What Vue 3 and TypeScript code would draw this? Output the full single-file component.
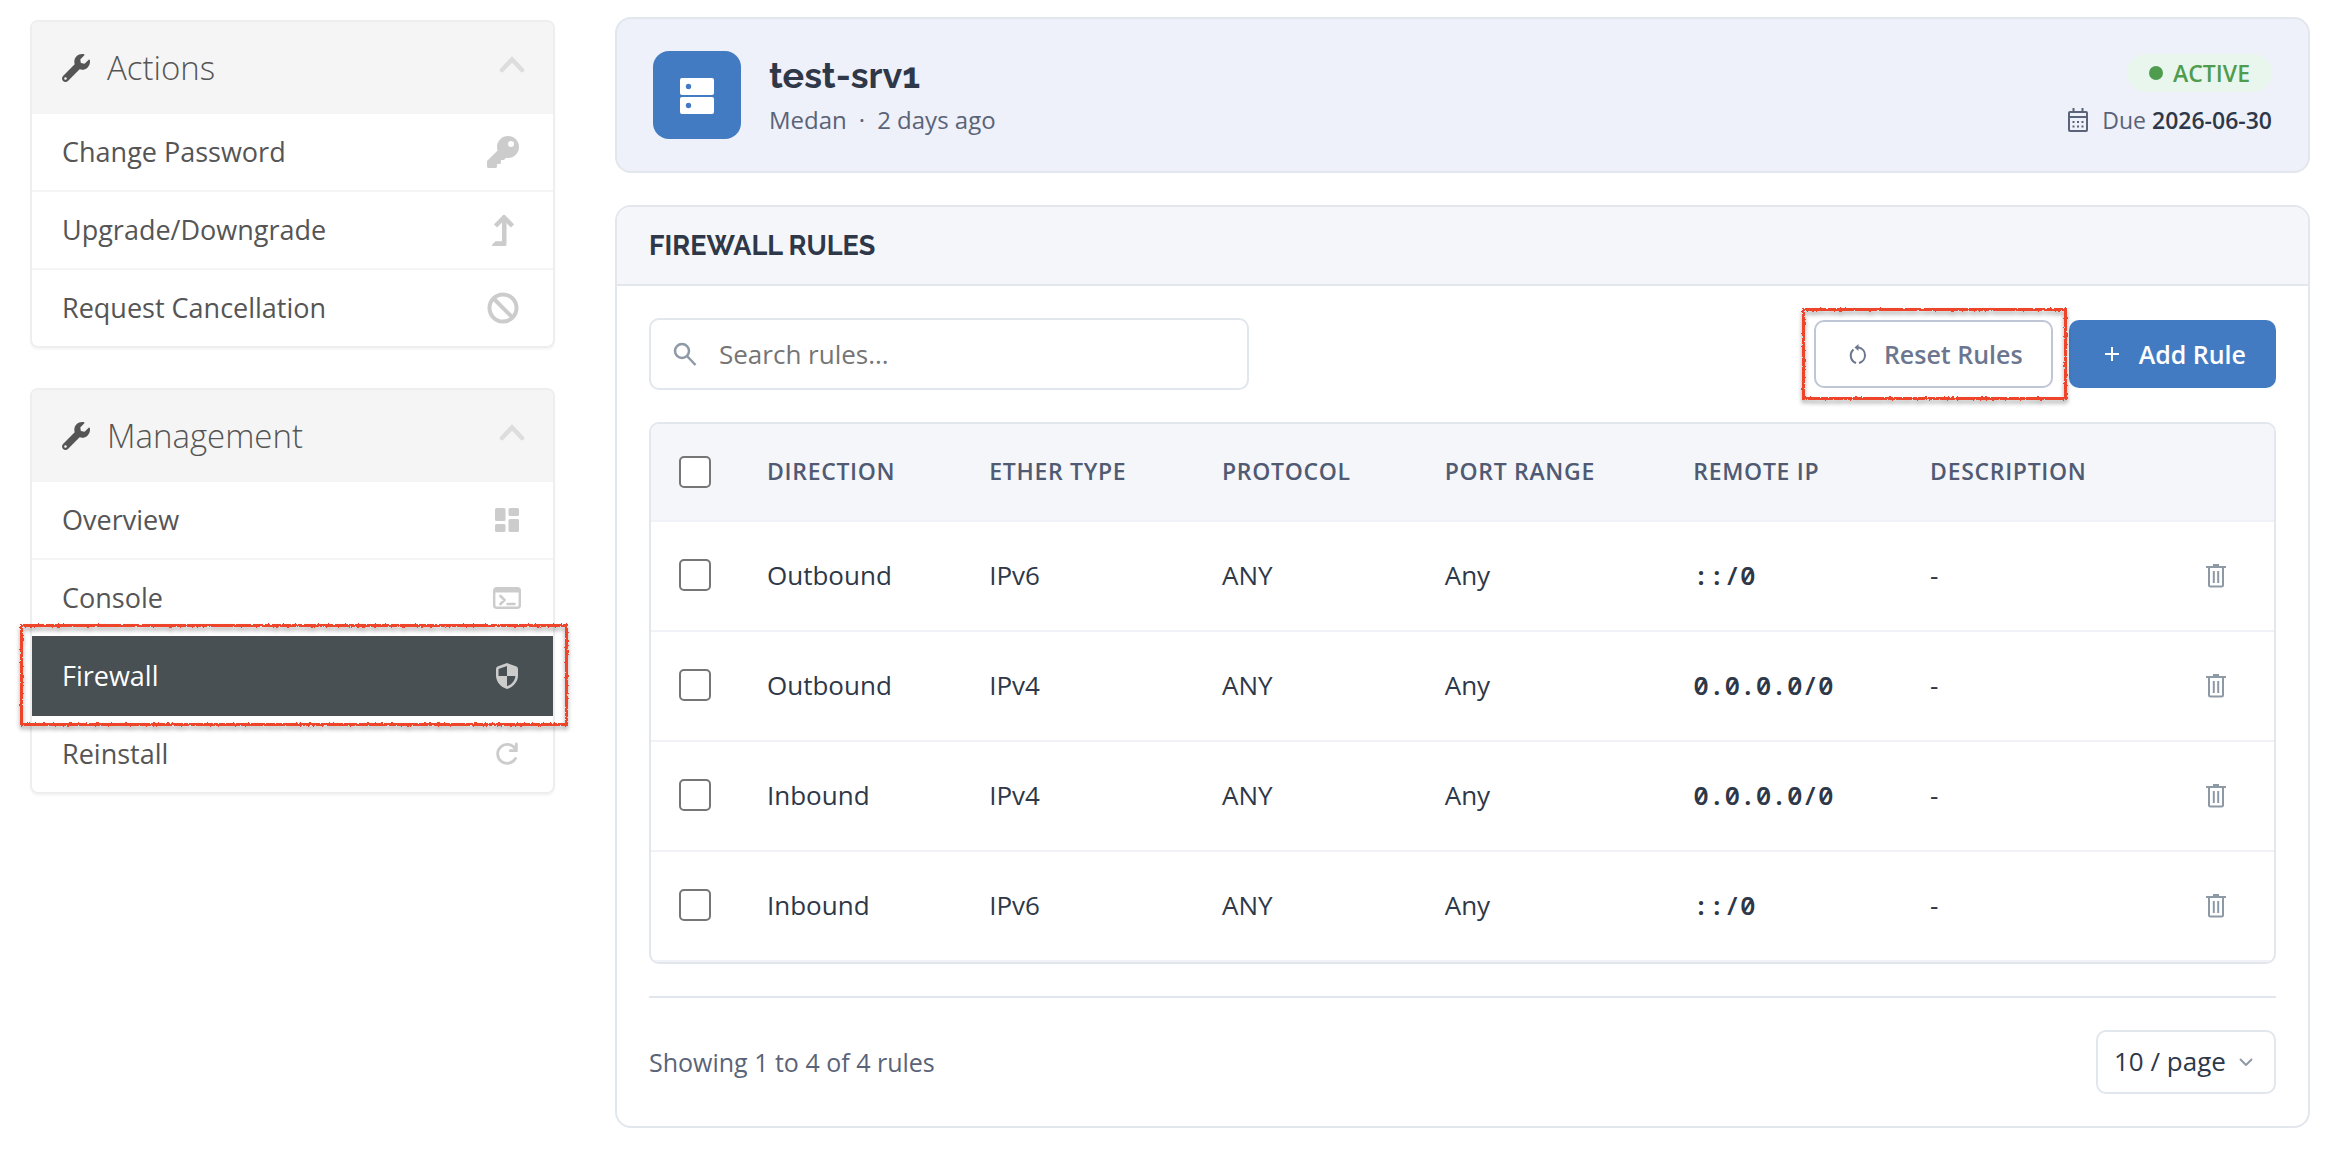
<script setup lang="ts">
import { ref } from 'vue'

interface MenuItem {
  label: string
  icon: string
  active?: boolean
}
interface Rule {
  id: number
  direction: string
  etherType: string
  protocol: string
  portRange: string
  remoteIp: string
  description: string
}

const menus: { title: string; items: MenuItem[] }[] = [
  {
    title: 'Actions',
    items: [
      { label: 'Change Password', icon: 'key' },
      { label: 'Upgrade/Downgrade', icon: 'level' },
      { label: 'Request Cancellation', icon: 'ban' },
    ],
  },
  {
    title: 'Management',
    items: [
      { label: 'Overview', icon: 'dashboard' },
      { label: 'Console', icon: 'console' },
      { label: 'Firewall', icon: 'shield', active: true },
      { label: 'Reinstall', icon: 'reload' },
    ],
  },
]

const columns = ['Direction', 'Ether Type', 'Protocol', 'Port Range', 'Remote IP', 'Description']

const rules: Rule[] = [
  { id: 1, direction: 'Outbound', etherType: 'IPv6', protocol: 'ANY', portRange: 'Any', remoteIp: '::/0', description: '-' },
  { id: 2, direction: 'Outbound', etherType: 'IPv4', protocol: 'ANY', portRange: 'Any', remoteIp: '0.0.0.0/0', description: '-' },
  { id: 3, direction: 'Inbound', etherType: 'IPv4', protocol: 'ANY', portRange: 'Any', remoteIp: '0.0.0.0/0', description: '-' },
  { id: 4, direction: 'Inbound', etherType: 'IPv6', protocol: 'ANY', portRange: 'Any', remoteIp: '::/0', description: '-' },
]

const search = ref('')
const pageSize = ref('10')
</script>

<template>
  <div class="page">
    <aside class="sidebar">
      <nav v-for="menu in menus" :key="menu.title" class="menu" :aria-label="menu.title">
        <h2 class="menu-head">
          <svg class="wrench" viewBox="0 0 512 512" aria-hidden="true">
            <path fill="currentColor" d="M507.73 109.1c-2.24-9.03-13.54-12.09-20.12-5.51l-74.36 74.36-67.88-11.31-11.31-67.88 74.36-74.36c6.62-6.62 3.43-17.9-5.66-20.16-47.38-11.74-99.55.91-136.58 37.93-39.64 39.64-50.55 97.1-34.05 147.2L18.74 402.76c-24.99 24.99-24.99 65.51 0 90.5 24.99 24.99 65.51 24.99 90.5 0l213.21-213.21c50.12 16.71 107.47 5.68 147.37-34.22 37.07-37.07 49.7-89.32 37.91-136.73zM64 472c-13.25 0-24-10.75-24-24 0-13.26 10.75-24 24-24s24 10.74 24 24c0 13.25-10.75 24-24 24z" />
          </svg>
          <span>{{ menu.title }}</span>
          <svg class="chevron" viewBox="0 0 26 18" aria-hidden="true">
            <path d="M3 15 13 4.500 23 15" fill="none" stroke="currentColor" stroke-width="4.500" stroke-linecap="round" />
          </svg>
        </h2>
        <a v-for="item in menu.items" :key="item.label" href="#" class="menu-item" :class="{ active: item.active }">
          <span>{{ item.label }}</span>
          <svg v-if="item.icon === 'key'" class="icon-lg" viewBox="0 0 32 32" aria-hidden="true">
            <path fill="currentColor" fill-rule="evenodd" d="M21 0A11 11 0 0 0 10 11c0 1.200 0.200 2.400 0.600 3.500L0.500 24.600a1.500 1.500 0 0 0-0.500 1.100V30.500C0 31.300 0.700 32 1.500 32H8.500c0.800 0 1.500-0.700 1.500-1.500V28h2.500c0.800 0 1.500-0.700 1.500-1.500V24h2.400c0.400 0 0.800-0.200 1.100-0.500l1.500-1.700c0.600 0.100 1.400 0.200 2 0.200A11 11 0 0 0 21 0zM24 5a3 3 0 1 1 0 6 3 3 0 0 1 0-6z" />
          </svg>
          <svg v-else-if="item.icon === 'level'" class="icon-lg" viewBox="0 0 32 32" aria-hidden="true">
            <path d="M8.500 12l8.500-8.800 8.500 8.800" fill="none" stroke="currentColor" stroke-width="4.500" stroke-linejoin="round" />
            <path d="M15 4h4.500v26.500a1.500 1.500 0 0 1-1.500 1.500H6c-1 0-1.300-0.900-0.700-1.600l3.200-3.200H15z" fill="currentColor" />
          </svg>
          <svg v-else-if="item.icon === 'ban'" class="icon-lg" viewBox="0 0 32 32" aria-hidden="true">
            <g fill="none" stroke="currentColor" stroke-width="4">
              <circle cx="16" cy="16" r="13.500" />
              <path d="M6.500 6.500l19 19" />
            </g>
          </svg>
          <svg v-else-if="item.icon === 'dashboard'" class="icon" viewBox="0 0 24 24" aria-hidden="true">
            <g fill="currentColor">
              <rect width="10.500" height="13" rx="1.500" />
              <rect x="13.500" width="10.500" height="8" rx="1.500" />
              <rect y="16" width="10.500" height="8" rx="1.500" />
              <rect x="13.500" y="11" width="10.500" height="13" rx="1.500" />
            </g>
          </svg>
          <svg v-else-if="item.icon === 'console'" class="icon console" viewBox="0 0 28 24" aria-hidden="true">
            <rect x="1.200" y="2.200" width="25.600" height="19.600" rx="2.500" fill="none" stroke="currentColor" stroke-width="2.400" />
            <path d="M2 2h24v4.500H2z" fill="currentColor" />
            <path d="M7.500 10l4 4-4 4M14.500 18h7" fill="none" stroke="currentColor" stroke-width="2.600" stroke-linecap="round" />
          </svg>
          <svg v-else-if="item.icon === 'shield'" class="icon" viewBox="0 0 24 26" aria-hidden="true">
            <path fill="currentColor" fill-rule="evenodd" d="M12 0 21.500 3.600Q23 4.200 23 6v6.500c0 6-4.500 11.500-11 13.500C5.500 24 1 18.500 1 12.500V6q0-1.800 1.500-2.400zM12 3 3.500 6v7H12zM12 13v10.300c5-1.800 8-5.600 8.400-10.300z" />
          </svg>
          <svg v-else class="icon" viewBox="0 0 24 24" aria-hidden="true">
            <path d="M20.500 16.500A9.500 9.500 0 1 1 20 6.500" fill="none" stroke="currentColor" stroke-width="2.800" stroke-linecap="round" />
            <path d="M21.300 2V8.700h-6" fill="none" stroke="currentColor" stroke-width="2.800" stroke-linecap="round" />
          </svg>
        </a>
      </nav>
    </aside>

    <main class="content">
      <header class="server">
        <div class="server-icon">
          <svg viewBox="0 0 34 36" aria-hidden="true">
            <g fill="#fff">
              <rect width="34" height="17" rx="2" />
              <rect y="19" width="34" height="17" rx="2" />
            </g>
            <g fill="#437bc2">
              <circle cx="8.500" cy="8.500" r="2.700" />
              <circle cx="8.500" cy="27.500" r="2.700" />
            </g>
          </svg>
        </div>
        <div class="server-info">
          <h1>test-srv1</h1>
          <p class="meta"><span>Medan</span><span>·</span><span>2 days ago</span></p>
        </div>
        <div class="server-state">
          <span class="badge"><i class="dot"></i>ACTIVE</span>
          <p class="due">
            <svg viewBox="0 0 20 24" aria-hidden="true">
              <g fill="none" stroke="currentColor" stroke-width="2">
                <rect x="1" y="4" width="18" height="19" rx="1" />
                <path d="M1 9h18M5.500 0v4M14.500 0v4" />
              </g>
              <path d="M4.500 13h2v2h-2zM9 13h2v2H9zM13.500 13h2v2h-2zM4.500 17.500h2v2h-2zM9 17.500h2v2H9zM13.500 17.500h2v2h-2z" fill="currentColor" />
            </svg>
            <span>Due <strong>2026-06-30</strong></span>
          </p>
        </div>
      </header>

      <section class="panel">
        <h2 class="panel-head">FIREWALL RULES</h2>
        <div class="panel-body">
          <div class="toolbar">
            <label class="search">
              <svg viewBox="0 0 24 24" aria-hidden="true">
                <g fill="none" stroke="currentColor" stroke-width="2.500">
                  <circle cx="9" cy="9" r="7" />
                  <path d="M14 14l8.500 9" />
                </g>
              </svg>
              <input v-model="search" type="text" placeholder="Search rules..." aria-label="Search rules" />
            </label>
            <div class="buttons">
              <span class="marked">
                <button type="button" class="btn reset">
                  <svg viewBox="0 0 18 20" aria-hidden="true">
                    <path d="M7 19A8 8 0 0 1 4.500 5.500M10 19A8 8 0 0 0 10 3.500H7" fill="none" stroke="currentColor" stroke-width="2" />
                    <path d="M9.500 0v7L5.500 3.500z" fill="currentColor" />
                  </svg>
                  Reset Rules
                </button>
                <span class="marker" aria-hidden="true"></span>
              </span>
              <button type="button" class="btn add">
                <svg class="plus" viewBox="0 0 14 14" aria-hidden="true">
                  <path d="M7 0v14M0 7h14" stroke="currentColor" stroke-width="2" />
                </svg>
                Add Rule
              </button>
            </div>
          </div>

          <div class="table-box">
            <table>
              <thead>
                <tr>
                  <th class="check"><input type="checkbox" aria-label="Select all rules" /></th>
                  <th v-for="column in columns" :key="column" scope="col">{{ column }}</th>
                  <th class="tools"></th>
                </tr>
              </thead>
              <tbody>
                <tr v-for="rule in rules" :key="rule.id">
                  <td class="check"><input type="checkbox" :aria-label="`Select rule ${rule.id}`" /></td>
                  <td>{{ rule.direction }}</td>
                  <td>{{ rule.etherType }}</td>
                  <td>{{ rule.protocol }}</td>
                  <td>{{ rule.portRange }}</td>
                  <td class="mono">{{ rule.remoteIp }}</td>
                  <td>{{ rule.description }}</td>
                  <td class="tools">
                    <button type="button" class="trash" :aria-label="`Delete rule ${rule.id}`">
                      <svg viewBox="0 0 20 24" aria-hidden="true">
                        <g fill="none" stroke="currentColor" stroke-width="2">
                          <path d="M0 3h20M7 1h6" />
                          <path d="M3 4v17a1.500 1.500 0 0 0 1.500 1.500h11a1.500 1.500 0 0 0 1.500-1.500V4" />
                          <path d="M7.800 7v12M12.200 7v12" />
                        </g>
                      </svg>
                    </button>
                  </td>
                </tr>
              </tbody>
            </table>
          </div>

          <footer class="panel-foot">
            <span>Showing 1 to 4 of 4 rules</span>
            <div class="select">
              <select v-model="pageSize" aria-label="Rules per page">
                <option value="10">10 / page</option>
                <option value="20">20 / page</option>
                <option value="50">50 / page</option>
              </select>
              <svg viewBox="0 0 14 8" aria-hidden="true">
                <path d="M1 1l6 6 6-6" fill="none" stroke="currentColor" stroke-width="2" />
              </svg>
            </div>
          </footer>
        </div>
      </section>
    </main>
    <svg class="defs" width="0" height="0" aria-hidden="true">
      <filter id="rough" x="-5%" y="-5%" width="110%" height="110%">
        <feTurbulence type="fractalNoise" baseFrequency="0.4" numOctaves="2" result="noise" />
        <feDisplacementMap in="SourceGraphic" in2="noise" scale="3" />
      </filter>
    </svg>
  </div>
</template>

<style>
body {
  margin: 0;
  background: #fff;
}
</style>

<style scoped>
* {
  box-sizing: border-box;
}
.page {
  display: flex;
  align-items: flex-start;
  gap: 60px;
  padding: 17px 26px 28px 30px;
  font-family: 'Open Sans', 'Noto Sans', sans-serif;
  font-size: 26px;
  line-height: 36px;
  color: #2e3848;
}
h1,
h2,
p {
  margin: 0;
}
button,
input,
select {
  font: inherit;
  color: inherit;
}

/* Sidebar menus */
.sidebar {
  flex: 0 0 525px;
  display: flex;
  flex-direction: column;
  gap: 40px;
  padding-top: 3px;
}
.menu {
  display: flex;
  flex-direction: column;
  border: 2px solid #eee;
  border-radius: 8px;
  box-shadow: 0 2px 2px rgba(0, 0, 0, 0.04);
  color: #555;
}
.menu-head {
  display: flex;
  align-items: center;
  height: 92px;
  padding: 0 28px 0 30px;
  border-radius: 6px 6px 0 0;
  background: #f5f5f5;
  font-size: 33px;
  font-weight: 300;
  line-height: 46px;
}
.wrench {
  width: 28px;
  height: 28px;
  margin-right: 17px;
}
.chevron {
  width: 26px;
  height: 18px;
  margin-left: auto;
  margin-bottom: 8px;
  color: #ddd;
}
.menu-item {
  display: flex;
  align-items: center;
  justify-content: space-between;
  height: 78px;
  padding: 0 34px 0 30px;
  border-bottom: 2px solid #f5f5f5;
  font-size: 27px;
  color: inherit;
  text-decoration: none;
}
.menu-item:last-child {
  height: 76px;
  border-bottom: 0;
}
.menu-item svg {
  color: #ccc;
}
.icon-lg {
  width: 32px;
  height: 32px;
}
.icon {
  width: 24px;
  height: 26px;
}
.icon.console {
  width: 28px;
  margin-right: -2px;
}
.menu-item.active {
  position: relative;
  margin-top: -2px;
  height: 80px;
  border-top: 2px solid;
  border-color: #495053;
  background: #495053;
  color: #fff;
}
.menu-item.active::after,
.marker {
  content: '';
  position: absolute;
  inset: -12px -14px -12px -12px;
  border: 3px solid #ee4429;
  filter: url(#rough) drop-shadow(0 3px 2px rgba(0, 0, 0, 0.35));
  pointer-events: none;
}
.menu-item.active::after {
  inset: -14px -15px -12px -12px;
}
.defs {
  position: absolute;
}

/* Server summary */
.content {
  flex: 1;
  min-width: 0;
  display: flex;
  flex-direction: column;
  gap: 32px;
}
.server {
  display: flex;
  align-items: center;
  gap: 28px;
  padding: 32px 36px;
  border: 2px solid #e2e6ed;
  border-radius: 16px;
  background: #eef1f9;
}
.server-icon {
  display: flex;
  align-items: center;
  justify-content: center;
  width: 88px;
  height: 88px;
  padding-top: 2px;
  border-radius: 16px;
  background: #437bc2;
}
.server-icon svg {
  width: 34px;
  height: 36px;
}
.server-info {
  display: flex;
  flex-direction: column;
  flex: 1;
  gap: 4px;
}
h1 {
  font-family: Raleway, Lato, sans-serif;
  font-size: 36px;
  font-weight: 700;
  line-height: 46px;
}
.meta {
  display: flex;
  gap: 12px;
  font-size: 24px;
  color: #5a6378;
}
.server-state {
  display: flex;
  flex-direction: column;
  align-items: flex-end;
  gap: 10px;
  padding-top: 2px;
}
.badge {
  display: flex;
  align-items: center;
  gap: 10px;
  height: 38px;
  padding: 0 22px;
  border-radius: 20px;
  background: #e9f6ee;
  font-size: 23px;
  font-weight: 600;
  color: #4f9c4f;
}
.dot {
  width: 14px;
  height: 14px;
  border-radius: 50%;
  background: currentColor;
}
.due {
  display: flex;
  align-items: center;
  gap: 14px;
  font-size: 23px;
  color: #5a6378;
}
.due svg {
  width: 20px;
  height: 24px;
}
.due strong {
  font-weight: 600;
  color: #2e3848;
}

/* Rules panel */
.panel {
  border: 2px solid #e2e6ed;
  border-radius: 16px;
}
.panel-head {
  height: 79px;
  padding: 0 32px;
  border-bottom: 2px solid #e2e6ed;
  border-radius: 14px 14px 0 0;
  background: #f4f6fa;
  font-family: Raleway, Lato, sans-serif;
  font-size: 27px;
  font-weight: 700;
  line-height: 77px;
}
.panel-body {
  display: flex;
  flex-direction: column;
  gap: 32px;
  padding: 32px;
}
.toolbar {
  display: flex;
  align-items: center;
  justify-content: space-between;
}
.search {
  display: flex;
  align-items: center;
  gap: 22px;
  width: 600px;
  height: 72px;
  padding: 0 22px;
  border: 2px solid #e2e6ed;
  border-radius: 10px;
  color: #8e99a6;
}
.search svg {
  width: 24px;
  height: 24px;
}
.search input {
  flex: 1;
  min-width: 0;
  padding: 0;
  border: 0;
  outline: 0;
  background: none;
  color: #2e3848;
}
.search input::placeholder {
  color: #757575;
  opacity: 1;
}
.buttons {
  display: flex;
  gap: 16px;
}
.marked {
  position: relative;
}
.btn {
  display: flex;
  align-items: center;
  height: 68px;
  border: 0;
  border-radius: 10px;
  font-size: 25px;
  font-weight: 600;
}
.reset {
  gap: 17px;
  padding: 0 28px 0 33px;
  border: 2px solid #bfc6d6;
  background: #fff;
  color: #6c768e;
}
.reset svg {
  width: 18px;
  height: 20px;
}
.add {
  gap: 20px;
  padding: 0 30px 0 36px;
  background: #437bc2;
  color: #fff;
}
.plus {
  width: 14px;
  height: 14px;
}
.table-box {
  border: 2px solid #e2e6ed;
  border-radius: 10px;
  overflow: hidden;
}
table {
  width: 100%;
  border-collapse: separate;
  border-spacing: 0;
}
th,
td {
  padding: 0 28px 2px;
  border-bottom: 2px solid #f0f2f7;
  text-align: left;
}
th {
  height: 98px;
  background: #f4f6fa;
  font-size: 23px;
  font-weight: 600;
  letter-spacing: 0.03em;
  text-transform: uppercase;
  white-space: nowrap;
  color: #505a73;
}
td {
  height: 110px;
}
.check {
  width: 88px;
}
th.check {
  padding-bottom: 0;
}
.check input {
  display: block;
  appearance: none;
  width: 32px;
  height: 32px;
  margin: 0;
  border: 2px solid #767676;
  border-radius: 5px;
  background: #fff;
}
.mono {
  font-family: 'SF Mono', 'Noto Sans Mono', 'DejaVu Sans Mono', monospace;
  font-weight: 600;
}
.tools {
  padding-bottom: 0;
  text-align: center;
}
.trash {
  display: inline-flex;
  align-items: center;
  justify-content: center;
  width: 40px;
  height: 40px;
  padding: 0;
  border: 0;
  background: none;
  color: #8e99a6;
}
.trash svg {
  width: 20px;
  height: 24px;
}
.panel-foot {
  display: flex;
  align-items: center;
  justify-content: space-between;
  padding-top: 32px;
  border-top: 2px solid #e2e6ed;
  font-size: 25px;
  color: #5a6378;
}
.select {
  position: relative;
}
.select select {
  appearance: none;
  width: 180px;
  height: 64px;
  padding: 0 16px 2px;
  border: 2px solid #e2e6ed;
  border-radius: 10px;
  background: #fff;
  font-size: 26px;
  color: #2e3848;
}
.select svg {
  position: absolute;
  right: 23px;
  top: 28px;
  width: 14px;
  height: 8px;
  color: #8e99a6;
  pointer-events: none;
}
</style>
